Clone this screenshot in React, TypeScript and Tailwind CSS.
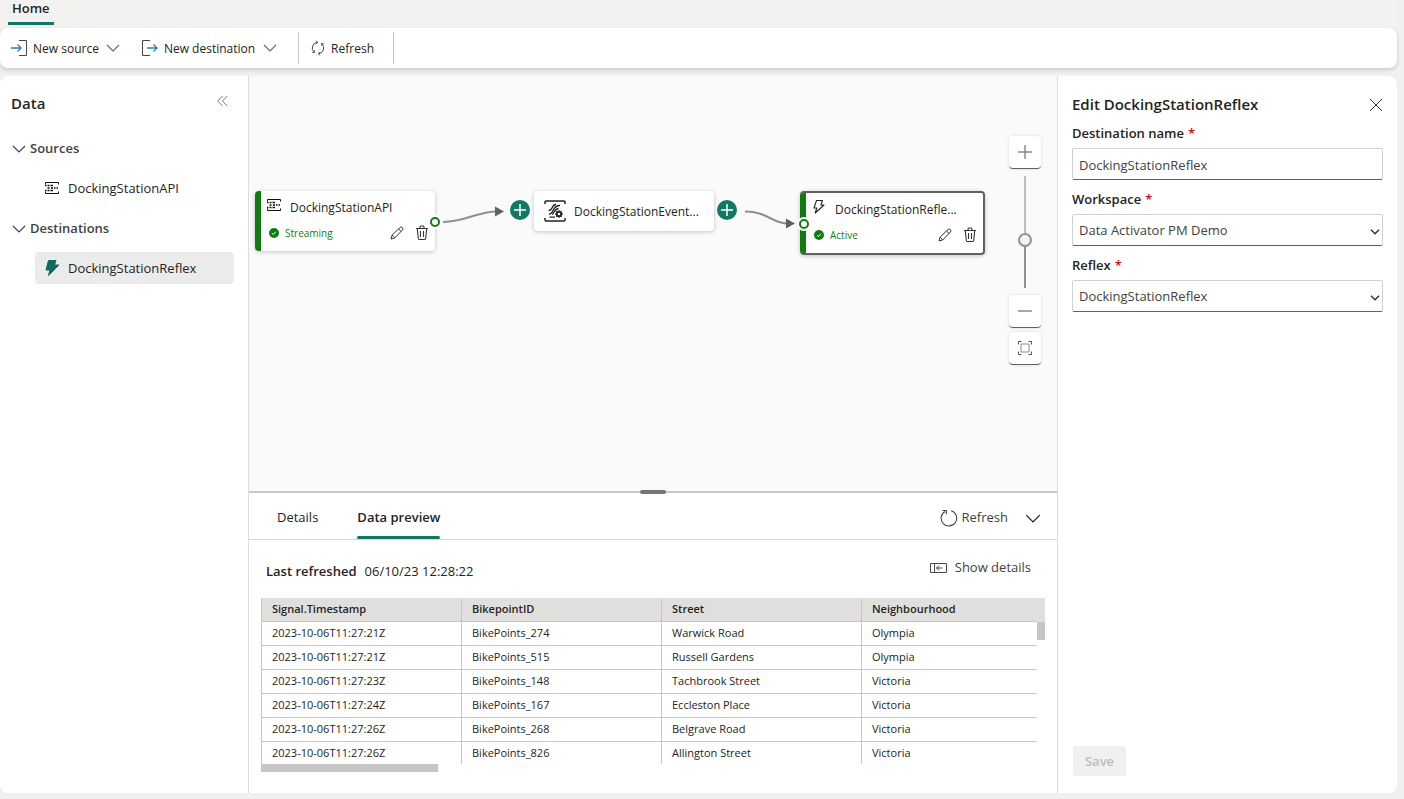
import type { ReactNode } from "react";
import clsx from "clsx";

const ROWS = [
  ["2023-10-06T11:27:21Z", "BikePoints_274", "Warwick Road", "Olympia"],
  ["2023-10-06T11:27:21Z", "BikePoints_515", "Russell Gardens", "Olympia"],
  ["2023-10-06T11:27:23Z", "BikePoints_148", "Tachbrook Street", "Victoria"],
  ["2023-10-06T11:27:24Z", "BikePoints_167", "Eccleston Place", "Victoria"],
  ["2023-10-06T11:27:26Z", "BikePoints_268", "Belgrave Road", "Victoria"],
  ["2023-10-06T11:27:26Z", "BikePoints_826", "Allington Street", "Victoria"],
];

const COLUMNS = ["Signal.Timestamp", "BikepointID", "Street", "Neighbourhood"];

type IconProps = { className?: string };

function ChevronIcon({ className }: IconProps) {
  return (
    <svg viewBox="0 0 14 8" fill="none" stroke="currentColor" strokeWidth="1.200" className={clsx("shrink-0", className)} aria-hidden>
      <path d="M1 1l6 6 6-6" />
    </svg>
  );
}

function SourceArrowIcon() {
  return (
    <svg width="16" height="16" viewBox="0 0 16 16" fill="none" aria-hidden>
      <path d="M8 .5h7.500v15H8" stroke="#444" />
      <path d="M0 8h10M6.500 4.500L10 8l-3.500 3.500" stroke="#2f7db8" strokeWidth="1.300" />
    </svg>
  );
}

function DestinationArrowIcon() {
  return (
    <svg width="16" height="16" viewBox="0 0 16 16" fill="none" aria-hidden>
      <path d="M8 .5H.5v15H8" stroke="#444" />
      <path d="M5 8h10M11.500 4.500L15 8l-3.500 3.500" stroke="#2f7db8" strokeWidth="1.300" />
    </svg>
  );
}

function SyncIcon() {
  return (
    <svg width="14" height="16" viewBox="0 0 14 16" fill="none" stroke="#444" aria-hidden>
      <path d="M6.500 2.300A5.700 5.700 0 0 0 3.200 12.300M7.500 13.700A5.700 5.700 0 0 0 10.800 3.700" />
      <path d="M4.800 .6l2 1.700-2 1.700M9.200 12l-2 1.700 2 1.700M3.400 10.200v2.300H1.200M10.600 5.800V3.500h2.200" strokeWidth=".8" />
    </svg>
  );
}

function RefreshIcon() {
  return (
    <svg width="18" height="18" viewBox="0 0 18 18" fill="none" stroke="#444" strokeWidth="1.100" aria-hidden>
      <path d="M11.200 1.700A7.800 7.800 0 1 1 5 2.400" />
      <path d="M2.500 1.500h3.800v3.800" />
    </svg>
  );
}

function StreamSourceIcon() {
  return (
    <svg width="16" height="16" viewBox="0 0 16 16" fill="none" stroke="#111" aria-hidden>
      <path d="M1.500 4.500v-2h13v2M1.500 11.500v2h13v-2" />
      <path d="M1 5.500h1.500M1 10.500h1.500M3.500 5.500h2M3.500 8h2M3.500 10.500h2M6.500 5.500h2.500M7 8h2M6.500 10.500H9M10 8h1.500M12.500 8H14" strokeWidth="1.700" />
    </svg>
  );
}

function EventStreamIcon() {
  return (
    <svg width="22" height="22" viewBox="0 0 22 22" fill="none" stroke="#222" className="shrink-0" aria-hidden>
      <path d="M1 4V2q0-1 1-1h18q1 0 1 1v2M1 18v2q0 1 1 1h18q1 0 1-1v-2" strokeWidth="1.500" />
      <path d="M5 14c5.500 0 2.500-8.500 11-8.500M4.500 10.500c5 0 2.500-6 7.500-6M5.500 17.200h5.500M8 14.500c2.500-1 2-5.500 6.500-6" strokeWidth="1.300" />
      <circle cx="15" cy="14" r="2.200" strokeWidth="1.800" />
      <path d="M15 10.200v1.600M15 16.200v1.600M11.200 14h1.600M17.200 14h1.600M12.300 11.300l1.200 1.200M16.500 15.500l1.200 1.200M17.700 11.300l-1.200 1.200M13.500 15.500l-1.200 1.200" strokeWidth="1.300" />
    </svg>
  );
}

function BoltIcon({ filled = false }: { filled?: boolean }) {
  return (
    <svg width="16" height="18" viewBox="0 0 16 18" fill={filled ? "#0f6b5c" : "none"} stroke={filled ? "#0f6b5c" : "#222"} strokeLinejoin="round" aria-hidden>
      {filled ? <path d="M4.500 1.500h7.500L10.500 6h4.500L4.500 16.500l1.500-5.500H2z" /> : <path d="M5.500 2.500h6L9.800 7H13L4.200 15l1.600-5H3z" strokeWidth="1.100" />}
    </svg>
  );
}

function PencilIcon() {
  return (
    <svg width="14" height="14" viewBox="0 0 14 14" fill="none" stroke="#333" strokeLinejoin="round" aria-hidden>
      <path d="M1 13l1-3.800L10 1.600a1.600 1.600 0 0 1 2.400 2.400L4.700 12zM8.600 3l2.400 2.400M2.200 9.300l2.400 2.600" />
    </svg>
  );
}

function TrashIcon() {
  return (
    <svg width="14" height="16" viewBox="0 0 14 16" fill="none" stroke="#333" aria-hidden>
      <path d="M1 3.500h12M5 3.300V2q0-1 1-1h2q1 0 1 1v1.300M2.300 3.500l1 10q.1 1 1.100 1h5.200q1 0 1.100-1l1-10M5.500 6v6M8.500 6v6" strokeWidth="1.100" />
    </svg>
  );
}

function CheckBadge() {
  return (
    <svg width="10" height="10" viewBox="0 0 10 10" aria-hidden>
      <circle cx="5" cy="5" r="5" fill="#107c10" />
      <path d="M3 5.200l1.400 1.300L7 3.800" fill="none" stroke="#fff" />
    </svg>
  );
}

function PanelIcon() {
  return (
    <svg width="17" height="10" viewBox="0 0 17 10" fill="none" stroke="#444" aria-hidden>
      <path d="M.5 .5h16v9H.5zM4.500 .5v9M6.500 5h6M9 2.500L6.500 5 9 7.500" />
    </svg>
  );
}

function TreeGroup({ label, children }: { label: string; children: ReactNode }) {
  return (
    <section>
      <button type="button" className="flex h-10 items-center gap-1 pt-px pl-3 font-semibold text-[#424242]">
        <ChevronIcon className="h-2 w-[14px] text-[#33475b]" />
        {label}
      </button>
      <div className="flex h-10 items-center pr-[14px] pl-[35px]">{children}</div>
    </section>
  );
}

type NodeProps = { title: string; status: string; icon: ReactNode; selected?: boolean };

function StatusNode({ title, status, icon, selected = false }: NodeProps) {
  return (
    <div
      className={clsx(
        "flex h-full overflow-hidden rounded bg-white shadow-[0_1px_4px_rgba(0,0,0,0.22)]",
        selected && "border-2 border-l-0 border-[#616161]",
      )}
    >
      <div className="w-[6px] shrink-0 bg-[#107c10]" />
      <div className="flex min-w-0 flex-1 flex-col">
        <div className="flex h-[34px] items-center gap-2 pl-[5px]">
          <div className="mb-[6px] w-4">{icon}</div>
          <span className="truncate text-xs font-medium text-[#242424]">{title}</span>
        </div>
        <div className="flex items-center pr-[6px] pl-2 text-[10px] font-medium text-[#107c10]">
          <CheckBadge />
          <span className="ml-[6px] flex-1 pt-px">{status}</span>
          <button type="button" aria-label={`Edit ${title}`} className="mr-[11px]">
            <PencilIcon />
          </button>
          <button type="button" aria-label={`Delete ${title}`}>
            <TrashIcon />
          </button>
        </div>
      </div>
    </div>
  );
}

function AddButton({ className }: IconProps) {
  return (
    <button type="button" aria-label="Add" className={clsx("absolute flex size-5 items-center justify-center rounded-full bg-[#117865]", className)}>
      <svg width="12" height="12" viewBox="0 0 12 12" stroke="#fff" strokeWidth="1.500" aria-hidden>
        <path d="M6 0v12M0 6h12" />
      </svg>
    </button>
  );
}

function Port({ className }: IconProps) {
  return (
    <span className={clsx("absolute size-[14px] rounded-full border-2 border-white bg-white", className)}>
      <span className="block size-[10px] rounded-full border-2 border-[#107c10]" />
    </span>
  );
}

function ZoomButton({ label, children }: { label: string; children: ReactNode }) {
  return (
    <button
      type="button"
      aria-label={label}
      className="flex h-[33px] w-8 items-center justify-center rounded border-b border-[#616161] bg-white shadow-[0_0_3px_rgba(0,0,0,0.15)]"
    >
      <svg width="16" height="16" viewBox="0 0 16 16" fill="none" stroke="#8a8a8a" aria-hidden>
        {children}
      </svg>
    </button>
  );
}

function Canvas() {
  return (
    <div className="relative min-h-0 flex-1 overflow-hidden bg-[#fafafa]">
      <svg width="808" height="415" viewBox="0 0 808 415" fill="none" className="absolute top-0 left-0" aria-hidden>
        <path d="M194 146c22 0 36-11 54-10.500" stroke="#8f8f8f" strokeWidth="2" />
        <path d="M496 135.500c22 0 28 12 42 12" stroke="#8f8f8f" strokeWidth="2" />
        <path d="M246 130.500l9 5-9 5zM537 142.500l9 5-9 5z" fill="#616161" />
      </svg>

      <div className="absolute top-[115px] left-[6px] h-[60px] w-[180px]">
        <StatusNode title="DockingStationAPI" status="Streaming" icon={<StreamSourceIcon />} />
      </div>
      <Port className="top-[139px] left-[179px]" />

      <AddButton className="top-[124px] left-[261px]" />
      <div className="absolute top-[115px] left-[285px] flex h-10 w-[180px] items-center gap-2 rounded bg-white px-[10px] shadow-[0_1px_4px_rgba(0,0,0,0.22)]">
        <EventStreamIcon />
        <span className="pt-px text-xs font-medium text-[#242424]">DockingStationEvent...</span>
      </div>
      <AddButton className="top-[124px] left-[468px]" />

      <div className="absolute top-[115px] left-[551px] h-16 w-[185px]">
        <StatusNode title="DockingStationRefle..." status="Active" icon={<BoltIcon />} selected />
      </div>
      <Port className="top-[141px] left-[548px]" />

      <div className="absolute top-[60px] right-4 flex flex-col items-center gap-[7px]">
        <ZoomButton label="Zoom in">
          <path d="M8 1v14M1 8h14" strokeWidth="1.500" />
        </ZoomButton>
        <input
          type="range"
          aria-label="Zoom level"
          min={0}
          max={100}
          defaultValue={42}
          className="h-28 w-[14px] appearance-none bg-transparent [direction:rtl] [writing-mode:vertical-lr] [&::-webkit-slider-runnable-track]:h-full [&::-webkit-slider-runnable-track]:w-[2px] [&::-webkit-slider-runnable-track]:bg-linear-to-b [&::-webkit-slider-runnable-track]:from-[#bdbdbd] [&::-webkit-slider-runnable-track]:from-50% [&::-webkit-slider-runnable-track]:to-[#919191] [&::-webkit-slider-runnable-track]:to-60% [&::-webkit-slider-thumb]:-ml-[6px] [&::-webkit-slider-thumb]:size-[14px] [&::-webkit-slider-thumb]:appearance-none [&::-webkit-slider-thumb]:rounded-full [&::-webkit-slider-thumb]:border-2 [&::-webkit-slider-thumb]:border-[#919191] [&::-webkit-slider-thumb]:bg-[#f3f3f3]"
        />
        <div className="flex flex-col gap-1">
          <ZoomButton label="Zoom out">
            <path d="M1 8h14" strokeWidth="1.500" />
          </ZoomButton>
          <ZoomButton label="Fit to screen">
            <path d="M4 4h8v8H4z" />
            <path d="M1.500 4.500v-3h3M11.500 1.500h3v3M14.500 11.500v3h-3M4.500 14.500h-3v-3" stroke="#555" />
          </ZoomButton>
        </div>
      </div>
    </div>
  );
}

function PreviewTable() {
  return (
    <div className="relative mx-3">
      <table className="w-full table-fixed border-separate border-spacing-0 text-[11px] text-[#242424]">
        <colgroup>
          <col className="w-[200px]" />
          <col className="w-[200px]" />
          <col className="w-[200px]" />
          <col />
          <col className="w-2" />
        </colgroup>
        <thead>
          <tr className="h-6 bg-[#e1dfdd]">
            {COLUMNS.map((name) => (
              <th key={name} scope="col" className="border-b border-l border-[#c8c6c4] px-[10px] text-left font-semibold">
                {name}
              </th>
            ))}
            <td />
          </tr>
        </thead>
        <tbody>
          {ROWS.map((row, i) => {
            const last = i === ROWS.length - 1;
            return (
              <tr key={i} className={last ? "h-[22px]" : "h-6"}>
                {row.map((cell, j) => (
                  <td key={j} className={clsx("border-l border-[#c8c6c4] px-[10px]", !last && "border-b")}>
                    {cell}
                  </td>
                ))}
                <td />
              </tr>
            );
          })}
        </tbody>
      </table>
      <div className="absolute top-6 right-0 h-[18px] w-2 bg-[#c8c6c4]" />
      <div className="h-2 w-[177px] bg-[#c8c6c4]" />
    </div>
  );
}

function BottomPanel() {
  return (
    <div className="relative h-[302px] shrink-0 border-t-2 border-[#c8c8c8] bg-white">
      <div className="absolute -top-[3px] left-1/2 h-1 w-[26px] -translate-x-1/2 rounded-full bg-[#757575]" />
      <div className="flex h-[47px] border-b border-[#d6d6d6] pr-4 pl-7">
        <div role="tablist" className="flex gap-[39px]">
          <button type="button" role="tab" aria-selected={false} className="pt-1">
            Details
          </button>
          <button type="button" role="tab" aria-selected className="relative pt-1 font-semibold">
            Data preview
            <span className="absolute inset-x-0 bottom-0 h-[3px] rounded-sm bg-[#117865]" />
          </button>
        </div>
        <button type="button" className="ml-auto flex items-center gap-1 pt-1 text-[#424242]">
          <RefreshIcon />
          Refresh
        </button>
        <button type="button" aria-label="Collapse panel" className="ml-[17px] pt-1">
          <ChevronIcon className="h-[9px] w-4" />
        </button>
      </div>
      <div className="flex h-[58px] items-center pr-[26px] pl-[17px]">
        <span className="mt-[6px] font-semibold">Last refreshed</span>
        <span className="mt-[6px] ml-2">06/10/23 12:28:22</span>
        <button type="button" className="mb-[2px] ml-auto flex items-center gap-2 text-[#424242]">
          <PanelIcon />
          Show details
        </button>
      </div>
      <PreviewTable />
    </div>
  );
}

function FieldLabel({ id, children }: { id: string; children: ReactNode }) {
  return (
    <label htmlFor={id} className="flex h-7 items-center gap-1 font-semibold">
      {children}
      <span className="text-[#c50f1f]">*</span>
    </label>
  );
}

const fieldClass =
  "h-8 w-full appearance-none rounded-xs border border-[#d1d1d1] border-b-[#616161] bg-white px-[6px] text-[#424242]";

function SelectField({ id, label, value }: { id: string; label: string; value: string }) {
  return (
    <div className="pt-[6px]">
      <FieldLabel id={id}>{label}</FieldLabel>
      <div className="relative">
        <select id={id} defaultValue={value} className={clsx(fieldClass, "pt-[2px]")}>
          <option>{value}</option>
        </select>
        <svg width="10" height="6" viewBox="0 0 10 6" fill="none" stroke="#333" strokeWidth="1.500" className="pointer-events-none absolute top-[15px] right-[3px]" aria-hidden>
          <path d="M1 .8l4 4 4-4" />
        </svg>
      </div>
    </div>
  );
}

function EditPanel() {
  return (
    <aside className="flex w-[340px] shrink-0 flex-col border-l border-[#dcdcdc] px-[14px] pt-3">
      <div className="flex h-8 items-center justify-between">
        <h2 className="text-[15px] font-semibold">Edit DockingStationReflex</h2>
        <button type="button" aria-label="Close" className="mt-[2px]">
          <svg width="14" height="14" viewBox="0 0 14 14" stroke="#333" aria-hidden>
            <path d="M1 1l12 12M13 1L1 13" />
          </svg>
        </button>
      </div>
      <FieldLabel id="destination-name">Destination name</FieldLabel>
      <input id="destination-name" type="text" defaultValue="DockingStationReflex" className={clsx(fieldClass, "shrink-0 pt-[2px]")} />
      <SelectField id="workspace" label="Workspace" value="Data Activator PM Demo" />
      <SelectField id="reflex" label="Reflex" value="DockingStationReflex" />
      <button type="button" disabled className="mt-auto mb-[17px] ml-px h-[30px] w-[53px] rounded-xs bg-[#f0f0f0] pt-[2px] font-semibold text-[#bdbdbd]">
        Save
      </button>
    </aside>
  );
}

export default function App() {
  return (
    <div className="flex h-screen flex-col bg-[#f0f0f0] pr-[7px] pb-[6px] font-['Open_Sans','Noto_Sans',sans-serif] text-[13px] text-[#242424]">
      <header className="flex h-7 shrink-0 bg-[#f3f2f1] pl-2">
        <button type="button" className="mb-[3px] h-[25px] border-b-[3px] border-[#117865] px-1 pb-[6px] leading-4 font-semibold">
          Home
        </button>
      </header>

      <div role="toolbar" className="flex h-10 shrink-0 items-center rounded-lg bg-white pl-[11px] text-xs shadow-[0_2px_4px_rgba(0,0,0,0.16)]">
        <button type="button" className="flex items-center gap-[6px]">
          <SourceArrowIcon />
          <span className="pt-px">New source</span>
          <ChevronIcon className="ml-px h-2 w-[14px] text-[#5b6f82]" />
        </button>
        <button type="button" className="ml-[22px] flex items-center gap-[6px]">
          <DestinationArrowIcon />
          <span className="pt-px">New destination</span>
          <ChevronIcon className="ml-[2px] h-2 w-[14px] text-[#5b6f82]" />
        </button>
        <button type="button" className="ml-[21px] flex h-8 w-24 items-center gap-[6px] border-x border-[#c8c8c8] pl-3">
          <SyncIcon />
          <span className="pt-px">Refresh</span>
        </button>
      </div>

      <main className="mt-2 flex min-h-0 flex-1 overflow-hidden rounded-lg bg-white">
        <nav className="w-[249px] shrink-0 border-r border-[#dcdcdc]">
          <div className="flex h-[52px] items-center justify-between pr-5 pl-[11px]">
            <h2 className="pt-[2px] text-[15px] font-semibold">Data</h2>
            <button type="button" aria-label="Collapse data pane" className="mb-[2px]">
              <svg width="11" height="12" viewBox="0 0 11 12" fill="none" stroke="#777" aria-hidden>
                <path d="M5.500 1L.8 6l4.700 5M10.200 1L5.500 6l4.700 5" />
              </svg>
            </button>
          </div>
          <TreeGroup label="Sources">
            <button type="button" className="flex h-8 w-full items-center gap-2 rounded px-[9px]">
              <StreamSourceIcon />
              <span className="pt-[2px]">DockingStationAPI</span>
            </button>
          </TreeGroup>
          <TreeGroup label="Destinations">
            <button type="button" className="flex h-8 w-full items-center gap-2 rounded bg-[#ebebeb] px-[9px]">
              <BoltIcon filled />
              <span className="pt-[2px]">DockingStationReflex</span>
            </button>
          </TreeGroup>
        </nav>

        <div className="flex min-w-0 flex-1 flex-col">
          <Canvas />
          <BottomPanel />
        </div>

        <EditPanel />
      </main>
    </div>
  );
}
